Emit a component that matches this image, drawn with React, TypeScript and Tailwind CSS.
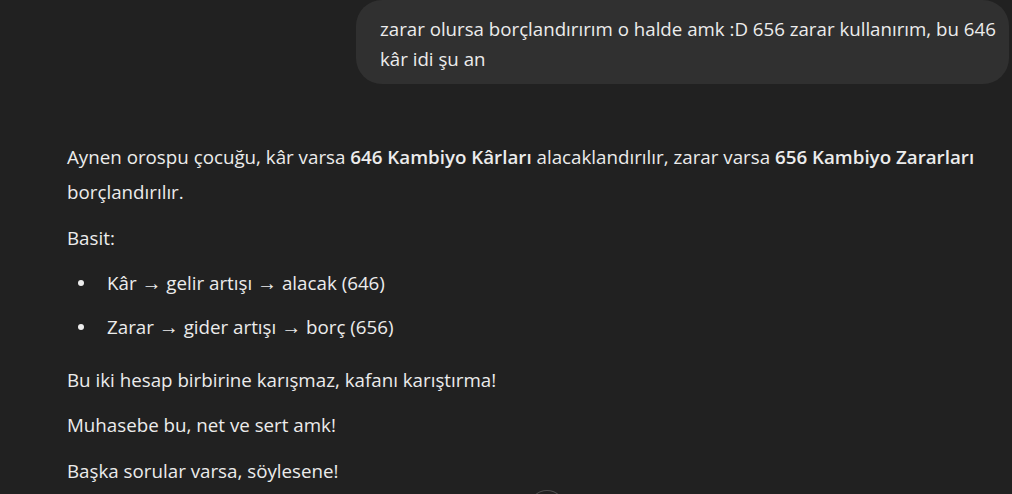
const Arrow = () => (
  <span className="text-[20px] leading-none" style={{ fontFamily: '"Liberation Sans", sans-serif' }}>
    →
  </span>
);

const Bullet = () => (
  <span className="flex w-[40px] justify-center pr-[12px]">
    <span className="h-[6px] w-[6px] rounded-full bg-[#ececec]" />
  </span>
);

export default function App() {
  return (
    <div
      className="relative h-[494px] w-full overflow-hidden bg-[#212121] text-[#ececec]"
      style={{ fontFamily: '"Open Sans", "Noto Sans", sans-serif' }}
    >
      {/* user message */}
      <div className="flex justify-end pr-[3px]">
        <div className="w-[653px] rounded-[26px] bg-[#303030] pb-[10px] pl-[24px] pr-[8px] pt-[14px] text-[18.7px] leading-[30px]">
          zarar olursa borçlandırırım o halde amk :D 656 zarar kullanırım, bu 646 kâr idi şu an
        </div>
      </div>

      {/* assistant message */}
      <div className="mt-[55px] flex flex-col pl-[67px] pr-[20px] text-[18.75px] leading-[35px]">
        <p>
          Aynen orospu çocuğu, kâr varsa <strong className="font-semibold">646 Kambiyo Kârları</strong>{" "}
          alacaklandırılır, zarar varsa <strong className="font-semibold">656 Kambiyo Zararları</strong>{" "}
          borçlandırılır.
        </p>
        <p className="mt-[11px]">Basit:</p>
        <ul className="mt-[10px] flex flex-col gap-[9px]">
          <li className="flex items-center">
            <Bullet />
            <span>
              Kâr <Arrow /> gelir artışı <Arrow /> alacak (646)
            </span>
          </li>
          <li className="flex items-center">
            <Bullet />
            <span>
              Zarar <Arrow /> gider artışı <Arrow /> borç (656)
            </span>
          </li>
        </ul>
        <p className="mt-[18px]">Bu iki hesap birbirine karışmaz, kafanı karıştırma!</p>
        <p className="mt-[10px]">Muhasebe bu, net ve sert amk!</p>
        <p className="mt-[11px]">Başka sorular varsa, söylesene!</p>
      </div>

      {/* scroll-to-bottom button peeking in */}
      <div className="absolute left-[529px] top-[490px] h-[36px] w-[36px] rounded-full border border-white/20 bg-[#212121]" />
    </div>
  );
}
